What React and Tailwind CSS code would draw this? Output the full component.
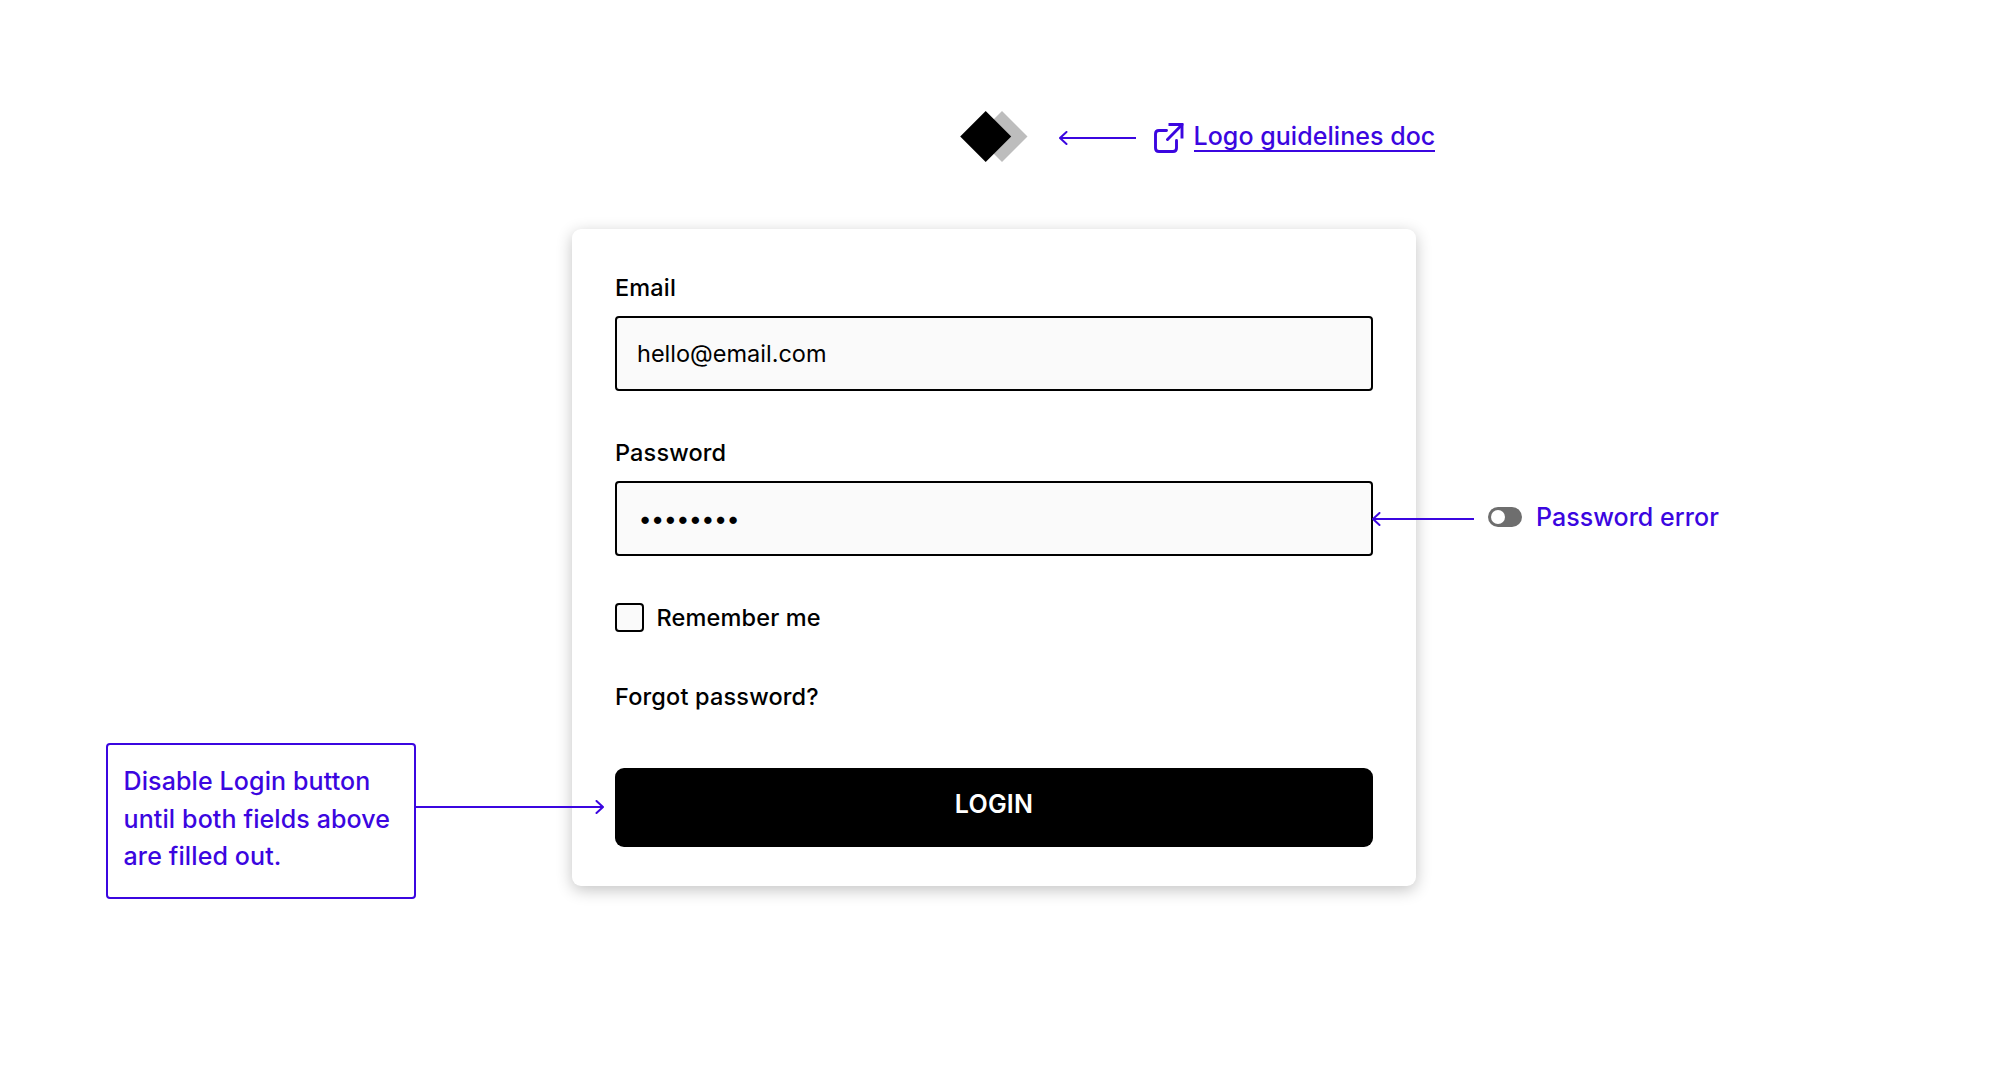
const Arrow = ({ width, direction = "left" }) => {
  const head = direction === "left" ? "M7.5 1 L1 7 L7.5 13" : `M${width - 7.5} 1 L${width - 1} 7 L${width - 7.5} 13`;

  return (
    <svg
      width={width}
      height="14"
      viewBox={`0 0 ${width} 14`}
      fill="none"
      stroke="currentColor"
      strokeWidth="2"
      className="shrink-0"
    >
      <path d={`M${direction === "left" ? 1 : 0} 7 H${direction === "left" ? width : width - 1}`} />
      <path d={head} strokeLinecap="round" strokeLinejoin="round" />
    </svg>
  );
};

const Logo = () => (
  <svg width="68" height="52" viewBox="0 0 68 52" className="shrink-0">
    <path d="M42 0 L67.5 25.5 L42 51 L16.5 25.5 Z" fill="#bdbdbd" />
    <path d="M25.7 0 L51.2 25.5 L25.7 51 L0.2 25.5 Z" fill="#000" />
  </svg>
);

const ExternalLinkIcon = () => (
  <svg
    width="30"
    height="30"
    viewBox="0 0 30 30"
    fill="none"
    stroke="currentColor"
    strokeWidth="2.9"
    strokeLinecap="round"
    strokeLinejoin="round"
    className="shrink-0"
  >
    <path d="M12.5 7.5 H5 Q1.5 7.5 1.5 11 V25 Q1.5 28.5 5 28.5 H19 Q22.5 28.5 22.5 25 V17.5" />
    <path d="M14.5 1.5 H28 V15.5" strokeLinecap="butt" strokeLinejoin="miter" />
    <path d="M13.5 16.5 L28 1.8" />
  </svg>
);

const Field = ({ label, type, value, inputClass }) => (
  <label className="block">
    <span className="block h-[30px] text-[23.5px] leading-[30px] font-medium tracking-[0.15px]">{label}</span>
    <input
      type={type}
      defaultValue={value}
      className={`mt-[12.5px] block h-[75.5px] w-full rounded-[4px] border-2 border-black bg-[#fafafa] text-[23.5px] outline-none ${inputClass}`}
    />
  </label>
);

const App = () => {
  return (
    <div className="h-[1065px] w-[2000px] overflow-hidden bg-white font-['Inter',sans-serif] text-black">
      <header className="flex h-[229px] items-start pt-[111px] pl-[960px]">
        <Logo />
        <div className="ml-[31px] flex h-[52px] items-center text-[#3b06e0]">
          <div className="mt-[2px] flex">
            <Arrow width={77} />
          </div>
          <div className="mt-[2px] ml-[18px] flex">
            <ExternalLinkIcon />
          </div>
          <a href="#" className="-mt-px ml-[9.5px] h-[31px] border-b-2 border-current text-[25px] leading-[31px] font-medium tracking-[0.05px] whitespace-nowrap">
            Logo guidelines doc
          </a>
        </div>
      </header>

      <main className="flex items-start">
        <aside className="relative z-10 mt-[514px] flex w-[572px] items-start pl-[106px] text-[#3b06e0]">
          <p className="h-[156px] w-[310px] shrink-0 rounded-[4px] border-2 border-current pt-[18px] pl-[15.5px] text-[25px] leading-[37.5px] font-medium tracking-[0.12px] whitespace-nowrap">
            Disable Login button
            <br />
            until both fields above
            <br />
            are filled out.
          </p>
          <div className="mt-[57px] flex">
            <Arrow width={188} direction="right" />
          </div>
        </aside>

        <form className="h-[657px] w-[844px] shrink-0 rounded-[9px] bg-white px-[43px] pt-[44px] shadow-[0_4px_16px_rgba(0,0,0,0.24)]">
          <Field label="Email" type="text" value="hello@email.com" inputClass="px-5 font-normal" />
          <div className="mt-[47px]">
            <Field label="Password" type="password" value="password" inputClass="pl-[21.5px] tracking-[-0.65px]" />
          </div>

          <label className="mt-[47px] flex h-[29px] items-center">
            <input type="checkbox" className="size-[29px] appearance-none rounded-[4px] border-2 border-black bg-[#fafafa]" />
            <span className="ml-[12.5px] text-[23.5px] font-medium tracking-[0.15px]">Remember me</span>
          </label>

          <a href="#" className="mt-[50px] block text-[23.5px] leading-[30px] font-medium tracking-[0.17px]">
            Forgot password?
          </a>

          <button type="button" className="mt-[56px] block h-[79px] w-full rounded-[9px] bg-black pb-[6px] text-[25px] font-semibold tracking-[0.2px] text-white">
            LOGIN
          </button>
        </form>

        <aside className="relative z-10 mt-[273px] -ml-[44px] flex h-[30px] items-center text-[#3b06e0]">
          <div className="mt-[3px] flex">
            <Arrow width={102} />
          </div>
          <div className="ml-[14px] flex h-5 w-[34px] items-center rounded-full bg-[#6e6e6e] pl-[3px]">
            <div className="size-[14px] rounded-full bg-white" />
          </div>
          <span className="ml-[14px] text-[25px] leading-[30px] font-medium tracking-[0.03px] whitespace-nowrap">Password error</span>
        </aside>
      </main>
    </div>
  );
};

export default App;
